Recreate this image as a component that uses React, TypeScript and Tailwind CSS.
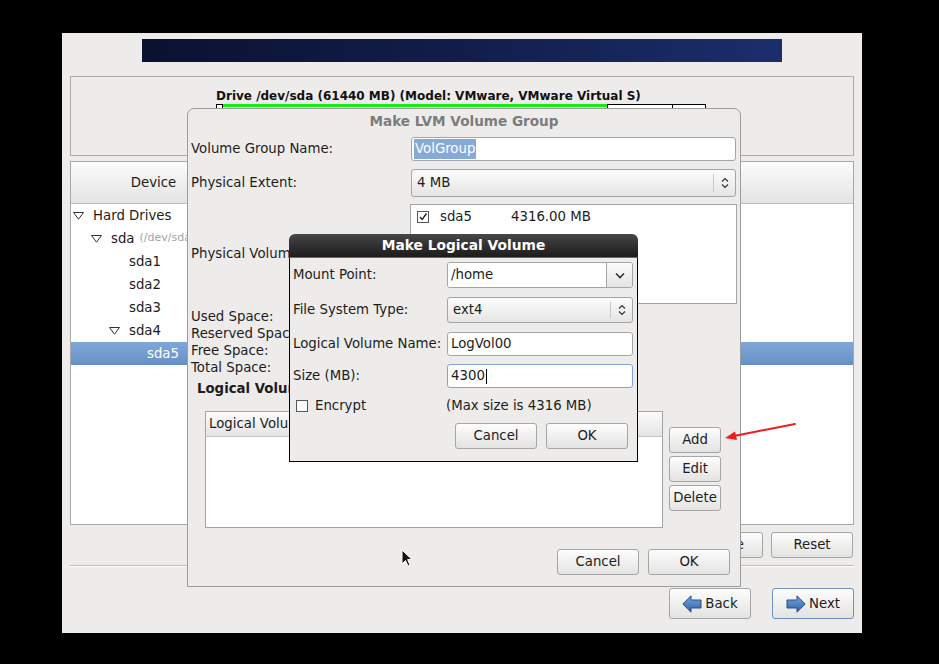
import React from "react";

const font = { fontFamily: '"DejaVu Sans", "Liberation Sans", sans-serif' };

function Btn({ children, className = "" }: { children: React.ReactNode; className?: string }) {
  return (
    <div
      className={`flex items-center justify-center rounded-[3px] border border-[#a5a5a5] bg-linear-to-b from-[#fdfdfd] to-[#e4e3e2] text-[13.3px] text-[#1c1c1c] ${className}`}
    >
      {children}
    </div>
  );
}

const Tri = () => (
  <svg width="11" height="8" viewBox="0 0 11 8">
    <path d="M0.5 0.5 H10.5 L5.5 7.2 Z" fill="none" stroke="#2e3436" strokeWidth="1" />
  </svg>
);

const UpDown = () => (
  <svg width="8" height="12" viewBox="0 0 8 12">
    <path d="M1 4.5 L4 1.5 L7 4.5 M1 7.5 L4 10.5 L7 7.5" fill="none" stroke="#2e3436" strokeWidth="1.2" />
  </svg>
);

const ChevDown = () => (
  <svg width="10" height="7" viewBox="0 0 10 7">
    <path d="M1 1.5 L5 5.5 L9 1.5" fill="none" stroke="#2e3436" strokeWidth="1.6" />
  </svg>
);

const ArrowIcon = ({ dir }: { dir: "left" | "right" }) => (
  <svg width="20" height="18" viewBox="0 0 20 18" style={{ transform: dir === "right" ? "scaleX(-1)" : undefined }}>
    <defs>
      <linearGradient id={`ag${dir}`} x1="0" y1="0" x2="0" y2="1">
        <stop offset="0" stopColor="#7aa6dc" />
        <stop offset="1" stopColor="#2d5fa6" />
      </linearGradient>
    </defs>
    <path d="M0.8 9 L9 0.8 V5 H19 V13 H9 V17.2 Z" fill={`url(#ag${dir})`} stroke="#234f8c" strokeWidth="1" />
  </svg>
);

function TreeRow({
  level,
  tri,
  label,
  extra,
  selected,
}: {
  level: number;
  tri?: boolean;
  label: string;
  extra?: string;
  selected?: boolean;
}) {
  return (
    <div
      className={`flex h-[23px] items-center text-[13.3px] ${
        selected ? "bg-linear-to-b from-[#80a7d9] to-[#6790c6] text-white" : "text-[#1c1c1c]"
      }`}
      style={{ paddingLeft: 2 + 18 * level }}
    >
      <div className="flex w-[20px] items-center">{tri ? <Tri /> : null}</div>
      <span>{label}</span>
      {extra ? <span className="ml-[5px] text-[11px] text-[#a3a3a3]">{extra}</span> : null}
    </div>
  );
}

export default function App() {
  return (
    <div className="relative h-[664px] w-[939px] overflow-hidden bg-black pl-[62px] pt-[33px]" style={font}>
      {/* Installer window */}
      <div className="flex h-[600px] w-[800px] flex-col bg-[#edeceb]">
        <div className="ml-[80px] mt-[6px] h-[23px] w-[640px] bg-linear-to-r from-[#0a1231] via-[#121d4b] to-[#1b2e6c]" />

        {/* Drive panel */}
        <div className="mx-[8px] mt-[14px] h-[80px] border border-[#aaaaaa] pt-[11px]">
          <div className="ml-[145px] text-[12px] font-bold leading-[16px] text-[#111]">
            Drive /dev/sda (61440 MB) (Model: VMware, VMware Virtual S)
          </div>
          <div className="ml-[145px] flex h-[30px] w-[490px]">
            <div className="w-[7px] border border-black bg-white" />
            <div className="w-[384px] border-t-[3px] border-[#10f010] bg-white" />
            <div className="w-[66px] border border-black bg-white" />
            <div className="w-[33px] border border-l-0 border-black bg-white" />
          </div>
        </div>

        {/* Device tree */}
        <div className="mx-[8px] mt-[5px] flex h-[364px] flex-col border border-[#a8a8a8] bg-white">
          <div className="flex h-[42px] items-center border-b border-[#bdbdbd] bg-linear-to-b from-[#fbfbfb] to-[#e5e4e3]">
            <div className="w-[165px] text-center text-[13.3px] text-[#1c1c1c]">Device</div>
          </div>
          <TreeRow level={0} tri label="Hard Drives" />
          <TreeRow level={1} tri label="sda" extra="(/dev/sda)" />
          <TreeRow level={2} label="sda1" />
          <TreeRow level={2} label="sda2" />
          <TreeRow level={2} label="sda3" />
          <TreeRow level={2} tri label="sda4" />
          <TreeRow level={3} label="sda5" selected />
        </div>

        {/* Tree buttons */}
        <div className="mt-[7px] flex h-[26px] justify-end gap-[8px] pr-[9px]">
          <Btn className="w-[82px]">Create</Btn>
          <Btn className="w-[82px]">Edit</Btn>
          <Btn className="w-[82px]">Delete</Btn>
          <Btn className="w-[82px]">Reset</Btn>
        </div>

        <div className="mx-[8px] mt-[7px] h-[2px] border-t border-[#bcbcbc] bg-white" />

        {/* Nav */}
        <div className="mt-[21px] flex h-[31px] justify-end gap-[21px] pr-[8px]">
          <Btn className="w-[82px] gap-[3px]">
            <ArrowIcon dir="left" />
            <span>Back</span>
          </Btn>
          <Btn className="w-[82px] gap-[3px] !border-[#6f92c4]">
            <ArrowIcon dir="right" />
            <span>Next</span>
          </Btn>
        </div>
      </div>

      {/* Make LVM Volume Group dialog */}
      <div className="absolute left-[187px] top-[108px] flex h-[479px] w-[554px] flex-col rounded-t-[7px] border border-[#9d9d9d] bg-[#edeceb] text-[13.3px] text-[#1c1c1c]">
        <div className="flex h-[24px] items-center justify-center text-[13.6px] font-bold text-[#7c7c7c]">Make LVM Volume Group</div>
        <div className="mt-[4px] flex items-center">
          <div className="w-[223px] pl-[3px]">Volume Group Name:</div>
          <div className="flex h-[24px] w-[325px] items-center rounded-[3px] border border-[#a5a5a5] bg-white pl-[2px]">
            <span className="bg-[#86a9d8] px-[1px] text-white">VolGroup</span>
          </div>
        </div>
        <div className="mt-[8px] flex items-center">
          <div className="w-[223px] pl-[3px]">Physical Extent:</div>
          <div className="flex h-[28px] w-[325px] items-center rounded-[3px] border border-[#a5a5a5] bg-linear-to-b from-[#fcfcfc] to-[#e6e5e4]">
            <span className="flex-1 pl-[5px]">4 MB</span>
            <div className="h-[18px] w-px bg-[#c6c6c6]" />
            <div className="flex w-[21px] justify-center">
              <UpDown />
            </div>
          </div>
        </div>
        <div className="mt-[7px] flex items-center">
          <div className="w-[222px] pl-[3px]">Physical Volumes to Use:</div>
          <div className="h-[100px] w-[327px] border border-[#a5a5a5] bg-white pt-[2px]">
            <div className="flex items-center">
              <div className="ml-[6px] flex h-[12px] w-[12px] items-center justify-center border border-[#555] bg-white">
                <svg width="10" height="10" viewBox="0 0 10 10">
                  <path d="M2 5 L4.2 7.5 L8.5 1.5" fill="none" stroke="#222" strokeWidth="1.4" />
                </svg>
              </div>
              <span className="ml-[11px] w-[71px]">sda5</span>
              <span>4316.00 MB</span>
            </div>
          </div>
        </div>
        <div className="mt-[4px] pl-[3px] leading-[17px]">
          <div>Used Space:</div>
          <div>Reserved Space:</div>
          <div>Free Space:</div>
          <div>Total Space:</div>
        </div>
        <div className="mt-[4px] pl-[9px] font-bold leading-[17px]">Logical Volumes</div>
        <div className="mt-[14px] flex pl-[17px]">
          <div className="h-[117px] w-[458px] border border-[#a5a5a5] bg-white">
            <div className="flex h-[25px] items-center border-b border-[#c4c4c4] bg-linear-to-b from-[#fbfbfb] to-[#e6e5e4] pl-[3px]">
              Logical Volume Name
            </div>
          </div>
          <div className="ml-[6px] flex flex-col gap-[3px] pt-[16px]">
            <Btn className="h-[26px] w-[52px]">Add</Btn>
            <Btn className="h-[26px] w-[52px]">Edit</Btn>
            <Btn className="h-[26px] w-[52px]">Delete</Btn>
          </div>
        </div>
        <div className="mt-[21px] flex justify-end gap-[9px] pr-[10px]">
          <Btn className="h-[26px] w-[82px]">Cancel</Btn>
          <Btn className="h-[26px] w-[82px]">OK</Btn>
        </div>
      </div>

      {/* Make Logical Volume dialog */}
      <div className="absolute left-[289px] top-[234px] flex h-[228px] w-[349px] flex-col text-[13.3px] text-[#1c1c1c]">
        <div className="flex h-[24px] items-center justify-center rounded-t-[6px] border-b border-[#506d99] bg-linear-to-b from-[#474747] to-[#1c1c1c] text-[13.8px] font-bold text-white">
          Make Logical Volume
        </div>
        <div className="flex flex-1 flex-col border border-t-0 border-black bg-[#edeceb]">
          <div className="mt-[4px] flex items-center">
            <div className="w-[157px] pl-[3px]">Mount Point:</div>
            <div className="flex h-[26px] w-[186px] overflow-hidden rounded-[3px] border border-[#a5a5a5]">
              <div className="flex flex-1 items-center bg-white pl-[3px]">/home</div>
              <div className="flex w-[26px] items-center justify-center border-l border-[#a5a5a5] bg-linear-to-b from-[#fcfcfc] to-[#e4e3e2]">
                <ChevDown />
              </div>
            </div>
          </div>
          <div className="mt-[9px] flex items-center">
            <div className="w-[157px] pl-[3px]">File System Type:</div>
            <div className="flex h-[26px] w-[186px] items-center rounded-[3px] border border-[#a5a5a5] bg-linear-to-b from-[#fcfcfc] to-[#e6e5e4]">
              <span className="flex-1 pl-[5px]">ext4</span>
              <div className="h-[16px] w-px bg-[#c6c6c6]" />
              <div className="flex w-[21px] justify-center">
                <UpDown />
              </div>
            </div>
          </div>
          <div className="mt-[9px] flex items-center">
            <div className="w-[157px] pl-[3px]">Logical Volume Name:</div>
            <div className="flex h-[24px] w-[186px] items-center rounded-[3px] border border-[#a5a5a5] bg-white pl-[3px]">
              LogVol00
            </div>
          </div>
          <div className="mt-[8px] flex items-center">
            <div className="w-[157px] pl-[3px]">Size (MB):</div>
            <div className="flex h-[24px] w-[186px] items-center rounded-[3px] border border-[#7ea4d4] bg-white pl-[3px]">
              4300<span className="ml-px inline-block h-[15px] w-px bg-black" />
            </div>
          </div>
          <div className="mt-[9px] flex h-[17px] items-center">
            <div className="flex w-[156px] items-center pl-[6px]">
              <div className="h-[12px] w-[12px] border border-[#555] bg-white" />
              <span className="ml-[7px]">Encrypt</span>
            </div>
            <span>(Max size is 4316 MB)</span>
          </div>
          <div className="mt-[9px] flex justify-end gap-[9px] pr-[9px]">
            <Btn className="h-[26px] w-[82px]">Cancel</Btn>
            <Btn className="h-[26px] w-[82px]">OK</Btn>
          </div>
        </div>
      </div>

      {/* Red annotation arrow */}
      <svg className="absolute left-[720px] top-[416px]" width="80" height="28" viewBox="0 0 80 28">
        <path d="M75 8 L14 20" stroke="#ee1c1c" strokeWidth="2" strokeLinecap="round" />
        <path d="M5 22 L15 15.5 L17 24 Z" fill="#ee1c1c" />
      </svg>

      {/* Mouse cursor */}
      <svg className="absolute left-[401px] top-[549px]" width="12" height="19" viewBox="0 0 12 19">
        <path d="M1 1 L1 15 L4.5 11.5 L7 17 L9 16 L6.6 10.6 L11 10.6 Z" fill="#111" stroke="#fff" strokeWidth="1" />
      </svg>
    </div>
  );
}
